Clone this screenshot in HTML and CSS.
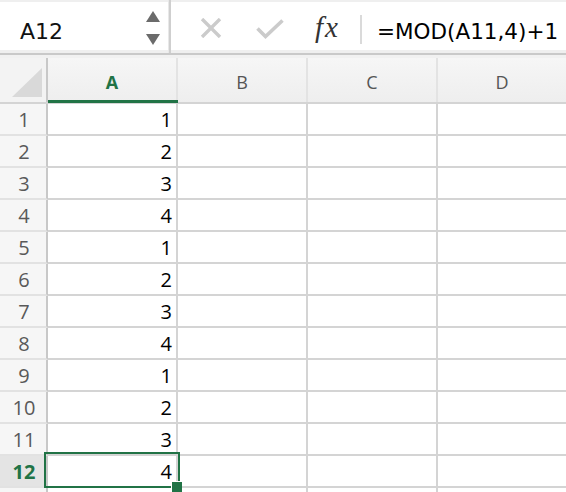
FILE: index.html
```html
<!DOCTYPE html>
<html>
<head>
<meta charset="utf-8">
<link rel="stylesheet" href="styles.css">
</head>
<body>
<div class="app">
  <div class="toolbar">
    <div class="namebox">
      <span class="cellref">A12</span>
      <div class="spinner">
        <svg width="14" height="11" viewBox="0 0 14 11"><polygon points="7,0 14,11 0,11" fill="#6b6b6b"/></svg>
        <svg width="14" height="11" viewBox="0 0 14 11"><polygon points="0,0 14,0 7,11" fill="#6b6b6b"/></svg>
      </div>
    </div>
    <div class="divider"></div>
    <div class="formulabar">
      <svg class="ico cancel" width="22" height="20" viewBox="0 0 22 20"><path d="M2 1 L20 19 M20 1 L2 19" stroke="#cbcbcb" stroke-width="3.4" fill="none"/></svg>
      <svg class="ico enter" width="28" height="20" viewBox="0 0 28 20"><path d="M1.5 9.5 L9.5 17.5 L26.5 1.5" stroke="#cbcbcb" stroke-width="3.6" fill="none"/></svg>
      <span class="fx">fx</span>
      <div class="fsep"></div>
      <span class="formula">=MOD(A11,4)+1</span>
    </div>
  </div>
  <div class="band"></div>
  <div class="sheet">
    <div class="corner"><svg width="30" height="29" viewBox="0 0 30 29"><polygon points="30,0 30,29 0,29" fill="#d9d9d9"/></svg></div>
    <div class="colhead active">A</div>
    <div class="colhead">B</div>
    <div class="colhead">C</div>
    <div class="colhead last">D</div>

    <div class="rowhead">1</div><div class="cell num">1</div><div class="cell"></div><div class="cell"></div><div class="cell"></div>
    <div class="rowhead">2</div><div class="cell num">2</div><div class="cell"></div><div class="cell"></div><div class="cell"></div>
    <div class="rowhead">3</div><div class="cell num">3</div><div class="cell"></div><div class="cell"></div><div class="cell"></div>
    <div class="rowhead">4</div><div class="cell num">4</div><div class="cell"></div><div class="cell"></div><div class="cell"></div>
    <div class="rowhead">5</div><div class="cell num">1</div><div class="cell"></div><div class="cell"></div><div class="cell"></div>
    <div class="rowhead">6</div><div class="cell num">2</div><div class="cell"></div><div class="cell"></div><div class="cell"></div>
    <div class="rowhead">7</div><div class="cell num">3</div><div class="cell"></div><div class="cell"></div><div class="cell"></div>
    <div class="rowhead">8</div><div class="cell num">4</div><div class="cell"></div><div class="cell"></div><div class="cell"></div>
    <div class="rowhead">9</div><div class="cell num">1</div><div class="cell"></div><div class="cell"></div><div class="cell"></div>
    <div class="rowhead">10</div><div class="cell num">2</div><div class="cell"></div><div class="cell"></div><div class="cell"></div>
    <div class="rowhead">11</div><div class="cell num">3</div><div class="cell"></div><div class="cell"></div><div class="cell"></div>
    <div class="rowhead active">12</div><div class="cell num selected">4</div><div class="cell"></div><div class="cell"></div><div class="cell"></div>
    <div class="rowhead"></div><div class="cell"></div><div class="cell"></div><div class="cell"></div><div class="cell"></div>
  </div>
</div>
</body>
</html>
```

FILE: styles.css
```css
html, body {
  margin: 0;
  padding: 0;
  background: #ffffff;
}
body {
  width: 566px;
  height: 492px;
  overflow: hidden;
}
.app {
  width: 566px;
  height: 492px;
  overflow: hidden;
}
.toolbar {
  display: flex;
  height: 51px;
  padding-top: 2px;
  background: #efefef;
  border-bottom: 2px solid #c9c9c9;
  box-sizing: content-box;
}
.namebox {
  width: 168px;
  height: 48px;
  background: #fff;
  display: flex;
  align-items: center;
  justify-content: space-between;
  padding: 0 8px 0 20px;
  box-sizing: border-box;
}
.cellref {
  font-family: "DejaVu Sans", sans-serif;
  font-size: 22px;
  color: #111;
  padding-top: 11px;
}
.spinner {
  display: flex;
  flex-direction: column;
  gap: 12px;
  margin-top: 3px;
}
.spinner svg {
  display: block;
}
.divider {
  width: 3px;
  margin-top: -2px;
  height: 53px;
  background: linear-gradient(to right, #e8e8e8 0 1px, #cfcfcf 1px 3px);
}
.formulabar {
  flex: 1;
  height: 48px;
  background: #fff;
  display: flex;
  align-items: center;
  padding-left: 29px;
}
.ico {
  display: block;
}
.cancel {
  margin-top: 4px;
}
.enter {
  margin-left: 34px;
  margin-top: 6px;
}
.fx {
  margin-left: 31px;
  width: 30px;
  font-family: "Liberation Serif", serif;
  font-style: italic;
  font-size: 29px;
  letter-spacing: 2px;
  color: #333;
  margin-top: 3px;
}
.fsep {
  width: 2px;
  height: 29px;
  margin-left: 15px;
  margin-top: 6px;
  background: #dadada;
}
.formula {
  margin-left: 15px;
  font-family: "DejaVu Sans", sans-serif;
  font-size: 21.5px;
  color: #000;
  white-space: nowrap;
  margin-top: 10px;
}
.band {
  height: 3px;
  background: #f1f1f1;
}
.sheet {
  display: grid;
  grid-template-columns: 46px repeat(4, 128px);
  grid-template-rows: 44px repeat(12, 30px) 4px;
  gap: 2px;
  background: #d4d4d4;
  font-family: "Open Sans", sans-serif;
}
.corner {
  background: #f3f3f3;
  position: relative;
  margin-right: -2px;
  border-right: 2px solid #c8c8c8;
}
.corner svg {
  position: absolute;
  left: 12px;
  top: 10px;
}
.colhead {
  background: linear-gradient(#f6f6f6, #eeeeee);
  display: flex;
  align-items: center;
  justify-content: center;
  font-size: 18px;
  color: #555;
  position: relative;
  margin-right: -2px;
  border-right: 2px solid #e3e3e3;
  padding-top: 4px;
  box-sizing: border-box;
}
.colhead.last {
  margin-right: 0;
  border-right: 0;
}
.colhead.active {
  color: #217346;
  font-weight: bold;
}
.colhead.active::after {
  content: "";
  position: absolute;
  left: 0;
  right: -2px;
  bottom: -1px;
  height: 3px;
  background: #217346;
}
.rowhead {
  background: #f6f6f6;
  display: flex;
  align-items: center;
  justify-content: center;
  font-size: 20px;
  color: #595959;
  margin-right: -2px;
  margin-bottom: -2px;
  border-right: 2px solid #c8c8c8;
  border-bottom: 2px solid #e2e2e2;
  padding-left: 2px;
}
.rowhead.active {
  background: #e4e4e4;
  color: #217346;
  font-weight: bold;
}
.cell {
  background: #fff;
  position: relative;
}
.cell.num {
  display: flex;
  align-items: center;
  justify-content: flex-end;
  padding-right: 4px;
  font-size: 20px;
  color: #000;
}
.cell.selected {
  z-index: 2;
}
.cell.selected::before {
  content: "";
  position: absolute;
  left: -4px;
  right: -4px;
  top: -4px;
  bottom: -2px;
  border: 2px solid #217346;
}
.cell.selected::after {
  content: "";
  position: absolute;
  left: 123px;
  top: 25px;
  width: 10px;
  height: 10px;
  background: #217346;
  border-left: 1px solid #fff;
  border-top: 1px solid #fff;
}
```
